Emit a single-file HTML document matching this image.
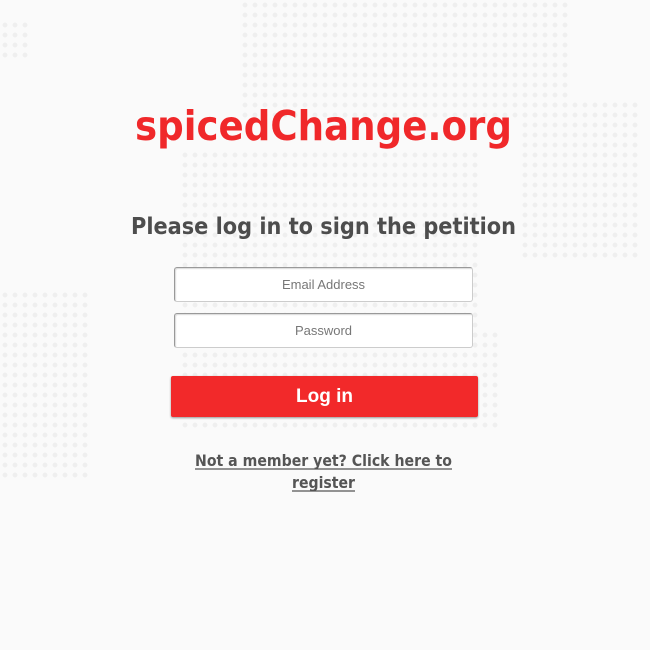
<!DOCTYPE html>
<html><head><style>
html,body{margin:0;padding:0}
body{width:650px;height:650px;background:#fafafa;position:relative;overflow:hidden;font-family:"Liberation Sans",sans-serif}
.dots{position:absolute;background-image:radial-gradient(circle,#efefef 2.2px,transparent 2.6px);background-size:10px 10px}
.inp{position:absolute;left:174px;width:297px;height:33px;border:1px solid #ccc;border-top-color:#999;border-left-color:#999;border-radius:3px;background:#fff;box-shadow:inset 1px 1px 1px rgba(0,0,0,.15);text-align:center;line-height:33px;font-size:13px;color:#777}
.btn{position:absolute;left:171px;top:376px;width:307px;height:41px;background:#f2292a;border-radius:2px;box-shadow:0 1px 2px rgba(0,0,0,.4);color:#fff;font-weight:bold;font-size:19px;text-align:center;line-height:41px}
svg{position:absolute;left:0;top:0}
</style></head><body>
<div class="dots" style="left:240px;top:0;width:330px;height:120px"></div>
<div class="dots" style="left:180px;top:150px;width:300px;height:280px"></div>
<div class="dots" style="left:520px;top:100px;width:120px;height:160px"></div>
<div class="dots" style="left:0;top:290px;width:90px;height:190px"></div>
<div class="dots" style="left:0;top:20px;width:30px;height:40px"></div>
<div class="dots" style="left:440px;top:330px;width:60px;height:100px"></div>
<svg width="650" height="650">
<text x="135" y="140" textLength="377" lengthAdjust="spacingAndGlyphs" font-family="DejaVu Sans" font-weight="bold" font-size="41" fill="#f0282a">spicedChange.org</text>
<text x="131" y="234" textLength="385" lengthAdjust="spacingAndGlyphs" font-family="DejaVu Sans" font-weight="bold" font-size="23" fill="#4d4d4d">Please log in to sign the petition</text>
<text x="195" y="466" textLength="257" lengthAdjust="spacingAndGlyphs" font-family="DejaVu Sans" font-weight="bold" font-size="16" fill="#555">Not a member yet? Click here to</text>
<text x="292" y="488" textLength="63" lengthAdjust="spacingAndGlyphs" font-family="DejaVu Sans" font-weight="bold" font-size="16" fill="#555">register</text>
<line x1="195" y1="469" x2="452" y2="469" stroke="#555" stroke-width="1.3"/>
<line x1="292" y1="491" x2="355" y2="491" stroke="#555" stroke-width="1.3"/>
</svg>
<div class="inp" style="top:267px">Email Address</div>
<div class="inp" style="top:313px">Password</div>
<div class="btn">Log in</div>
</body></html>
